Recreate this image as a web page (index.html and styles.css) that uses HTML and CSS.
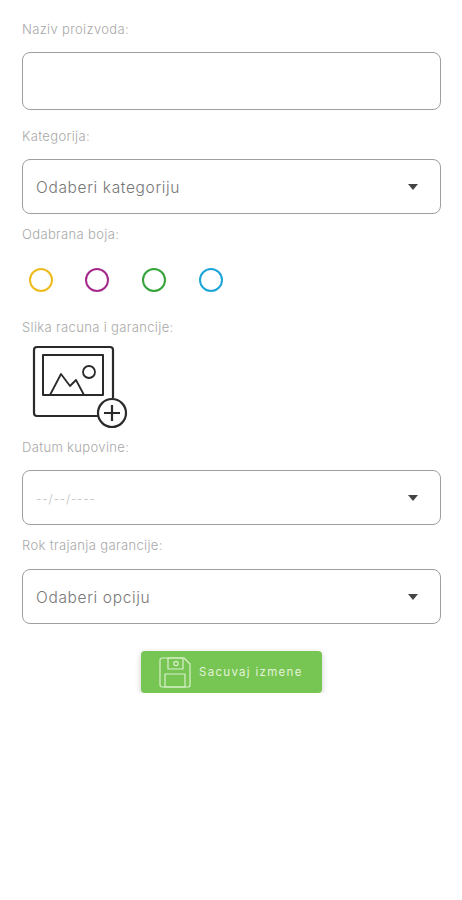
FILE: index.html
```html
<!DOCTYPE html>
<html lang="en">
  <head>
    <meta charset="UTF-8" />
    <meta name="viewport" content="width=device-width, initial-scale=1.0" />
    <title>Izmena proizvoda</title>
    <link rel="stylesheet" href="styles.css">
  </head>
  <body>
    <form class="product-form">
      <div class="field-label first">Naziv proizvoda:</div>
      <div class="field name-field"></div>

      <div class="field-label">Kategorija:</div>
      <div class="field select-field">
        <span class="field-value">Odaberi kategoriju</span>
        <span class="arrow"></span>
      </div>

      <div class="field-label tight">Odabrana boja:</div>
      <div class="colors">
        <span class="color yellow"></span>
        <span class="color purple"></span>
        <span class="color green"></span>
        <span class="color blue"></span>
      </div>

      <div class="field-label">Slika racuna i garancije:</div>
      <svg class="add-image" width="98" height="85" viewBox="0 0 98 85" fill="none" stroke="#2a2a2a" stroke-linejoin="round">
        <path d="M66 71H5a3 3 0 0 1-3-3V5a3 3 0 0 1 3-3h73a3 3 0 0 1 3 3v48" stroke-width="2.2" />
        <rect x="11" y="10" width="60" height="40" stroke-width="2" />
        <path d="M18 50l11-21 9 12 6-6 8 15" stroke-width="1.8" />
        <circle cx="57" cy="27" r="6" stroke-width="1.8" />
        <circle cx="80" cy="68" r="14" fill="#fff" stroke-width="2.2" />
        <path d="M80 60v16M72 68h16" stroke-width="2.2" />
      </svg>

      <div class="field-label after-image">Datum kupovine:</div>
      <div class="field select-field">
        <span class="date-value">--/--/----</span>
        <span class="arrow"></span>
      </div>

      <div class="field-label tight wide">Rok trajanja garancije:</div>
      <div class="field select-field">
        <span class="field-value">Odaberi opciju</span>
        <span class="arrow"></span>
      </div>

      <button type="button" class="save-button">
        <svg width="32" height="31" viewBox="0 0 32 31" fill="none" stroke="#d9f0cc" stroke-width="1.2" stroke-linejoin="round">
          <path d="M3 1h22l6 6v21a2 2 0 0 1-2 2H3a2 2 0 0 1-2-2V3a2 2 0 0 1 2-2z" />
          <rect x="9" y="1" width="15" height="11" />
          <circle cx="17" cy="6.5" r="2.2" />
          <rect x="6" y="17" width="20" height="13" />
        </svg>
        <span>Sacuvaj izmene</span>
      </button>
    </form>
  </body>
</html>
```

FILE: styles.css
```css
body {
  font-family: "Inter", "Noto Sans", sans-serif;
  margin: 0;
  padding: 0;
  background: #fff;
}
.product-form {
  display: flex;
  flex-direction: column;
  padding: 21px 21px 0 22px;
}
.field-label {
  height: 16px;
  margin-top: 18px;
  margin-bottom: 15px;
  font-size: 13px;
  font-weight: 300;
  line-height: 16px;
  letter-spacing: 0.35px;
  color: #a8a8a8;
}
.field-label.first {
  margin-top: 0;
}
.field-label.tight {
  margin-top: 12px;
}
.field-label.wide {
  margin-bottom: 16px;
}
.field-label.after-image {
  margin-top: 9px;
}
.field {
  box-sizing: border-box;
  height: 55px;
  border: 1.5px solid #9f9f9f;
  border-radius: 8px;
  background: #fff;
}
.name-field {
  height: 58px;
}
.select-field {
  display: flex;
  align-items: center;
  justify-content: space-between;
  padding: 2px 22px 0 13px;
}
.field-value {
  font-size: 15.5px;
  font-weight: 300;
  letter-spacing: 0.65px;
  color: #777;
}
.date-value {
  font-size: 12px;
  font-weight: 300;
  letter-spacing: 0.8px;
  color: #bdbdbd;
}
.arrow {
  width: 0;
  height: 0;
  margin-top: -2px;
  border-left: 5.5px solid transparent;
  border-right: 5.5px solid transparent;
  border-top: 6px solid #444;
}
.colors {
  display: flex;
  gap: 32.7px;
  height: 24px;
  margin-top: 11px;
  margin-left: 6.5px;
  margin-bottom: 9px;
}
.colors + .field-label {
  margin-top: 18px;
  margin-bottom: 10px;
}
.color {
  box-sizing: border-box;
  width: 24px;
  height: 24px;
  border: 2.5px solid;
  border-radius: 50%;
}
.color.yellow {
  border-color: #eebb1f;
}
.color.purple {
  border-color: #a52a8c;
}
.color.green {
  border-color: #35a33a;
}
.color.blue {
  border-color: #1ea5d8;
}
.add-image {
  margin-left: 10px;
}
.save-button {
  display: flex;
  align-items: center;
  gap: 8px;
  align-self: flex-start;
  box-sizing: border-box;
  width: 181px;
  height: 42px;
  margin-top: 27px;
  margin-left: 119px;
  padding: 0 0 0 18px;
  border: none;
  border-radius: 4px;
  background: #77c552;
  box-shadow: 0 2px 6px rgba(0, 0, 0, 0.2);
  font-family: inherit;
  font-size: 11.5px;
  letter-spacing: 1.3px;
  color: #e4f4da;
}
```
